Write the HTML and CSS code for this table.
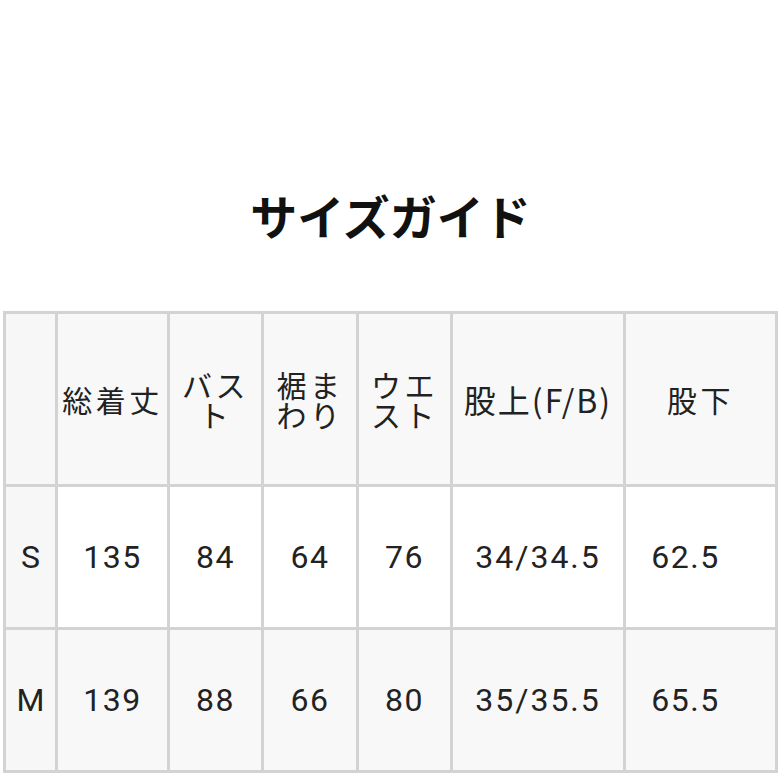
FILE: index.html
```html
<!DOCTYPE html>
<html lang="ja">
<head>
<meta charset="utf-8">
<link rel="stylesheet" href="styles.css">
</head>
<body>
<div class="page">
  <h1 class="title">サイズガイド</h1>
  <table class="size-table">
    <colgroup>
      <col class="c0"><col class="c1"><col class="c2"><col class="c3"><col class="c4"><col class="c5"><col class="c6">
    </colgroup>
    <tr class="head">
      <td class="first"></td>
      <td>総着丈</td>
      <td>バス<br>ト</td>
      <td>裾ま<br>わり</td>
      <td>ウエ<br>スト</td>
      <td class="wide">股上(F/B)</td>
      <td>股下</td>
    </tr>
    <tr class="row-s">
      <td class="first">S</td>
      <td>135</td>
      <td>84</td>
      <td>64</td>
      <td>76</td>
      <td class="wide">34/34.5</td>
      <td class="last">62.5</td>
    </tr>
    <tr class="row-m">
      <td class="first">M</td>
      <td>139</td>
      <td>88</td>
      <td>66</td>
      <td>80</td>
      <td class="wide">35/35.5</td>
      <td class="last">65.5</td>
    </tr>
  </table>
</div>
</body>
</html>
```

FILE: styles.css
```css
html, body {
  margin: 0;
  padding: 0;
  background: #ffffff;
}
.page {
  width: 781px;
  height: 781px;
  overflow: hidden;
  font-family: Roboto, "Noto Sans CJK JP", sans-serif;
  color: #222222;
}
.title {
  margin: 0;
  padding-top: 187px;
  line-height: 56px;
  height: 56px;
  margin-bottom: 68px;
  text-align: center;
  font-family: "Noto Sans CJK JP", sans-serif;
  font-weight: 700;
  font-size: 47px;
  color: #111111;
}
.size-table {
  margin-left: 3px;
  width: 774px;
  border-collapse: collapse;
  table-layout: fixed;
  border: 2px solid #cfcfcf;
}
.c0 { width: 52px; }
.c1 { width: 112px; }
.c2 { width: 94px; }
.c3 { width: 95px; }
.c4 { width: 94px; }
.c5 { width: 173px; }
.c6 { width: 152px; }
.size-table td {
  border: 3px solid #d3d3d3;
  padding: 0;
  text-align: center;
  vertical-align: middle;
  font-size: 32px;
  line-height: 34px;
  letter-spacing: 1.5px;
}
.head td {
  height: 170px;
  background: #f8f8f8;
  font-family: "Noto Sans CJK JP", sans-serif;
  font-size: 30px;
  line-height: 30px;
  letter-spacing: 3.5px;
}
.head td.wide {
  letter-spacing: 3px;
  font-size: 32px;
}
.row-s td {
  height: 140px;
  background: #ffffff;
}
.row-m td {
  height: 140px;
  background: #f8f8f8;
}
.size-table td.first {
  background: #f7f7f7;
  letter-spacing: 0;
}
.size-table td.wide {
  letter-spacing: 2px;
}
.size-table td.last {
  padding-right: 30px;
}
```
